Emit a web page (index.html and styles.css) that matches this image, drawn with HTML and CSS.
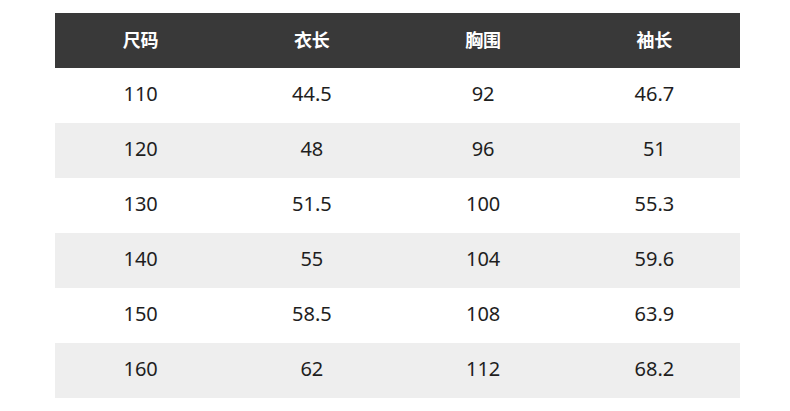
FILE: index.html
```html
<!DOCTYPE html>
<html>
<head>
<meta charset="utf-8">
<link rel="stylesheet" href="styles.css">
</head>
<body>
<div class="page">
  <table class="size-table">
    <thead>
      <tr><th>尺码</th><th>衣长</th><th>胸围</th><th>袖长</th></tr>
    </thead>
    <tbody>
      <tr><td>110</td><td>44.5</td><td>92</td><td>46.7</td></tr>
      <tr><td>120</td><td>48</td><td>96</td><td>51</td></tr>
      <tr><td>130</td><td>51.5</td><td>100</td><td>55.3</td></tr>
      <tr><td>140</td><td>55</td><td>104</td><td>59.6</td></tr>
      <tr><td>150</td><td>58.5</td><td>108</td><td>63.9</td></tr>
      <tr><td>160</td><td>62</td><td>112</td><td>68.2</td></tr>
    </tbody>
  </table>
</div>
</body>
</html>
```
FILE: styles.css
```css
html, body {
  margin: 0;
  padding: 0;
  background: #ffffff;
}
.page {
  padding: 13px 50px 0 55px;
  font-family: "Noto Sans", "Noto Sans CJK SC", sans-serif;
}
.size-table {
  width: 685px;
  border-collapse: collapse;
  table-layout: fixed;
}
.size-table th {
  height: 52px;
  padding: 0 0 3px;
  background: #393939;
  color: #ffffff;
  font-family: "Noto Sans CJK SC", sans-serif;
  font-size: 18px;
  font-weight: 700;
  line-height: 18px;
  text-align: center;
  vertical-align: middle;
}
.size-table td {
  height: 52px;
  padding: 0 0 3px;
  color: #1e1e1e;
  font-size: 20px;
  line-height: 24px;
  text-align: center;
  vertical-align: middle;
}
.size-table tbody tr:nth-child(even) td {
  background: #eeeeee;
}
```
